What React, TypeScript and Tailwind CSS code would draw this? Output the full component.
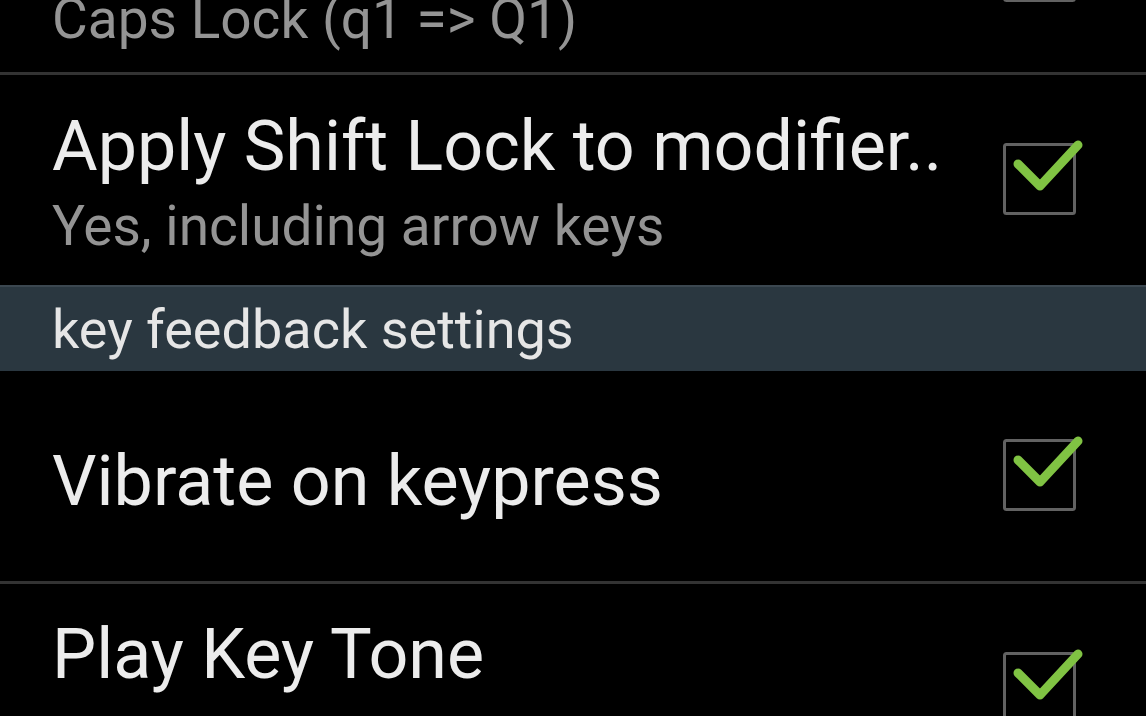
import React from 'react'

type Pref = {
  title: string
  summary?: string
  checked: boolean
}

function CheckBox({ checked }: { checked: boolean }) {
  return (
    <svg width="86" height="80" viewBox="0 0 86 80" className="shrink-0 -mt-[6px]">
      <rect x="2.5" y="7.5" width="70" height="69" rx="2" fill="none" stroke="#626262" strokeWidth="3" />
      {checked && (
        <polyline
          points="16,27 38,49 76,8"
          fill="none"
          stroke="#80c343"
          strokeWidth="9"
          strokeLinecap="round"
          strokeLinejoin="round"
        />
      )}
    </svg>
  )
}

function PrefRow({ pref, offset, gap = 'mt-[8px]' }: { pref: Pref; offset: string; gap?: string }) {
  return (
    <div className="flex h-[210px] items-center justify-between pl-[52px] pr-[58px]">
      <div className={`flex flex-col ${offset}`}>
        <span className="text-[70px] leading-[80px] text-[#ececec] whitespace-nowrap">{pref.title}</span>
        {pref.summary && (
          <span className={`${gap} text-[55px] leading-[64px] text-[#949494] whitespace-nowrap`}>{pref.summary}</span>
        )}
      </div>
      <CheckBox checked={pref.checked} />
    </div>
  )
}

function Divider() {
  return <div className="h-[3px] bg-[#333333]" />
}

export default function App() {
  return (
    <div
      className="h-screen w-full overflow-hidden bg-black"
      style={{ fontFamily: 'Roboto, "Noto Sans", sans-serif' }}
    >
      <div className="-mt-[138px] flex flex-col">
        <PrefRow pref={{ title: 'Shift Lock mode', summary: 'Caps Lock (q1 => Q1)', checked: true }} offset="mt-[16px]" />
        <Divider />
        <PrefRow
          pref={{ title: 'Apply Shift Lock to modifier..', summary: 'Yes, including arrow keys', checked: true }}
          offset="mt-[4px]"
        />

        <div className="flex h-[86px] items-center border-t-2 border-[#3b4750] bg-[#2a3740] pl-[52px]">
          <span className="text-[54px] leading-[64px] text-[#e6e6e6] mt-[2px]">key feedback settings</span>
        </div>

        <PrefRow pref={{ title: 'Vibrate on keypress', checked: true }} offset="mt-[10px]" />
        <Divider />
        <PrefRow
          pref={{ title: 'Play Key Tone', summary: 'Internal speaker, default tone level', checked: true }}
          offset="mt-[10px]"
          gap="mt-[16px]"
        />
      </div>
    </div>
  )
}
